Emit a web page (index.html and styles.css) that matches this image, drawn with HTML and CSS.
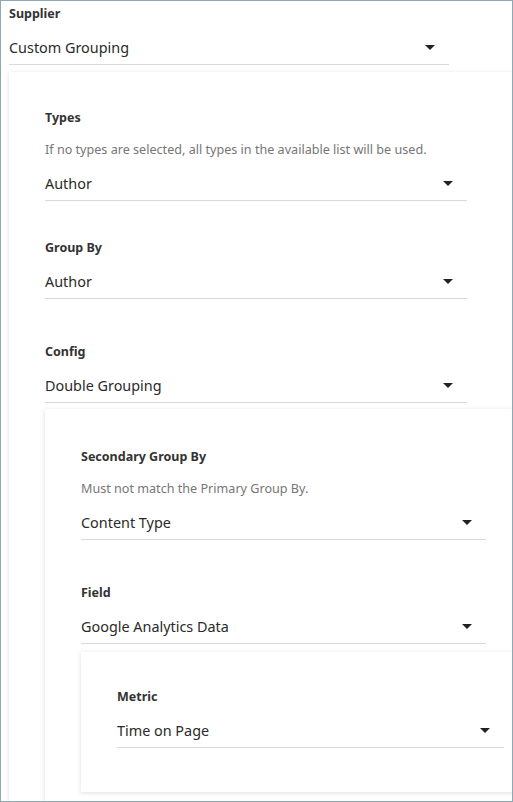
FILE: index.html
```html
<!DOCTYPE html>
<html lang="en">
<head>
<meta charset="utf-8">
<title>Supplier settings</title>
<link rel="stylesheet" href="styles.css">
</head>
<body>
<div class="page">
  <div class="field">
    <div class="label">Supplier</div>
    <div class="select"><span class="value">Custom Grouping</span><span class="caret"></span></div>
  </div>
  <div class="card card--l1">
    <div class="field">
      <div class="label">Types</div>
      <div class="help">If no types are selected, all types in the available list will be used.</div>
      <div class="select"><span class="value">Author</span><span class="caret"></span></div>
    </div>
    <div class="field field--compact">
      <div class="label">Group By</div>
      <div class="select"><span class="value">Author</span><span class="caret"></span></div>
    </div>
    <div class="field">
      <div class="label">Config</div>
      <div class="select"><span class="value">Double Grouping</span><span class="caret"></span></div>
    </div>
    <div class="card card--l2">
      <div class="field">
        <div class="label">Secondary Group By</div>
        <div class="help">Must not match the Primary Group By.</div>
        <div class="select"><span class="value">Content Type</span><span class="caret"></span></div>
      </div>
      <div class="field">
        <div class="label">Field</div>
        <div class="select"><span class="value">Google Analytics Data</span><span class="caret"></span></div>
      </div>
      <div class="card card--l3">
        <div class="field">
          <div class="label">Metric</div>
          <div class="select"><span class="value">Time on Page</span><span class="caret"></span></div>
        </div>
      </div>
    </div>
  </div>
</div>
</body>
</html>
```
FILE: styles.css
```css
html, body {
  margin: 0;
  padding: 0;
  background: #ffffff;
}

body {
  font-family: "Noto Sans", "Open Sans", sans-serif;
  color: #2a2a2a;
}

.page {
  box-sizing: border-box;
  width: 513px;
  height: 802px;
  border: 1px solid #8ba9b7;
  padding: 4px 0 0 8px;
  overflow: hidden;
  background: #ffffff;
}

.field + .field {
  margin-top: 44px;
}

.field + .field.field--compact {
  margin-top: 38px;
}

.label {
  font-size: 12.5px;
  line-height: 18px;
  font-weight: 700;
  color: #333333;
}

.help {
  margin-top: 14px;
  font-size: 12.6px;
  line-height: 18px;
  color: #767676;
}

.select {
  box-sizing: border-box;
  height: 34px;
  margin-top: 8px;
  padding-right: 14px;
  display: flex;
  align-items: center;
  justify-content: space-between;
  border-bottom: 1px solid #d9d9d9;
}

.value {
  font-size: 14.4px;
  line-height: 20px;
  color: #2a2a2a;
}

.caret {
  width: 0;
  height: 0;
  border-left: 5px solid transparent;
  border-right: 5px solid transparent;
  border-top: 5px solid #222222;
}

.card {
  margin-top: 7px;
  margin-right: -60px;
  padding: 37px 0 44px 36px;
  background: #ffffff;
  box-shadow: 0 1px 5px rgba(0, 0, 0, 0.13);
}

.card--l2 {
  margin-top: 6px;
  padding-top: 39px;
}

.card--l3 {
  margin-top: 8px;
  padding-top: 36px;
}

.page > .field > .select {
  width: 440px;
}

.card--l1 > .field > .select {
  width: 422px;
}

.card--l2 > .field > .select {
  width: 405px;
}

.card--l3 > .field > .select {
  width: 387px;
}
```
